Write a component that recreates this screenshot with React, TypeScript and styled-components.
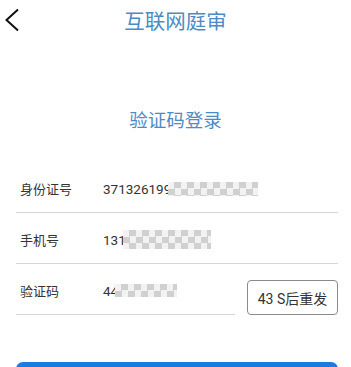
import styled, { createGlobalStyle } from 'styled-components';

const GlobalStyle = createGlobalStyle`
  html, body {
    margin: 0;
    padding: 0;
    background: #fff;
    font-family: Roboto, "Noto Sans CJK SC", sans-serif;
  }
`;

const Page = styled.div`
  width: 351px;
  height: 367px;
  overflow: hidden;
  background: #fff;
`;

const Header = styled.header`
  display: grid;
  grid-template-columns: 40px 1fr 40px;
  align-items: center;
  height: 40px;
`;

const BackButton = styled.button`
  display: flex;
  align-items: center;
  padding: 0 0 0 4px;
  height: 40px;
  border: none;
  background: none;
`;

const Title = styled.h1`
  margin: 0;
  text-align: center;
  font-size: 20.5px;
  font-weight: 400;
  color: #4e8bc3;
  font-family: "Noto Sans CJK SC", sans-serif;
`;

const Subtitle = styled.h2`
  margin: 66px 0 30px;
  text-align: center;
  line-height: 26px;
  font-size: 18.5px;
  font-weight: 400;
  color: #4e8bc3;
  font-family: "Noto Sans CJK SC", sans-serif;
`;

const Form = styled.div`
  padding: 0 13px 0 16px;
`;

const Row = styled.div`
  display: flex;
  align-items: center;
  gap: 12px;
`;

const Field = styled.div`
  flex: 1;
  display: flex;
  align-items: center;
  height: 51px;
  padding-top: 3px;
  box-sizing: border-box;
  border-bottom: 1px solid #d6d6d6;
`;

const Label = styled.span`
  width: 83px;
  padding-left: 4px;
  font-size: 13px;
  color: #333;
  font-family: "Noto Sans CJK SC", sans-serif;
`;

const Value = styled.span`
  display: flex;
  align-items: center;
  font-size: 13.5px;
  color: #333;
`;

const Mask = styled.span<{ $w: number; $h: number }>`
  display: inline-block;
  width: ${(p) => p.$w}px;
  height: ${(p) => p.$h}px;
  margin-left: -3px;
  background-color: #f2f2f2;
  background-image: conic-gradient(#d0d0d0 25%, #f2f2f2 0 50%, #d0d0d0 0 75%, #f2f2f2 0);
  background-size: 13px 13px;
  filter: blur(0.7px);
`;

const ResendButton = styled.button`
  width: 91px;
  height: 35px;
  margin-top: 16px;
  border: 1px solid #8a8a8a;
  border-radius: 4px;
  background: #fff;
  color: #333;
  font-size: 14px;
  padding: 0;
  font-family: Roboto, "Noto Sans CJK SC", sans-serif;
`;

const SubmitButton = styled.button`
  display: block;
  width: 322px;
  height: 44px;
  margin: 47px 0 0 16px;
  border: none;
  border-radius: 7px;
  background: #1a7be2;
`;

export default function App() {
  return (
    <Page>
      <GlobalStyle />
      <Header>
        <BackButton aria-label="返回">
          <svg width="16" height="24" viewBox="0 0 16 24">
            <polyline points="14,1.5 2.5,12 14,22.5" fill="none" stroke="#111" strokeWidth="2" />
          </svg>
        </BackButton>
        <Title>互联网庭审</Title>
        <span />
      </Header>
      <Subtitle>验证码登录</Subtitle>
      <Form>
        <Row>
          <Field>
            <Label>身份证号</Label>
            <Value>
              371326199
              <Mask $w={90} $h={14} />
            </Value>
          </Field>
        </Row>
        <Row>
          <Field>
            <Label>手机号</Label>
            <Value>
              131
              <Mask $w={88} $h={19} />
            </Value>
          </Field>
        </Row>
        <Row>
          <Field>
            <Label>验证码</Label>
            <Value>
              44
              <Mask $w={62} $h={13} />
            </Value>
          </Field>
          <ResendButton>43 S后重发</ResendButton>
        </Row>
      </Form>
      <SubmitButton />
    </Page>
  );
}
